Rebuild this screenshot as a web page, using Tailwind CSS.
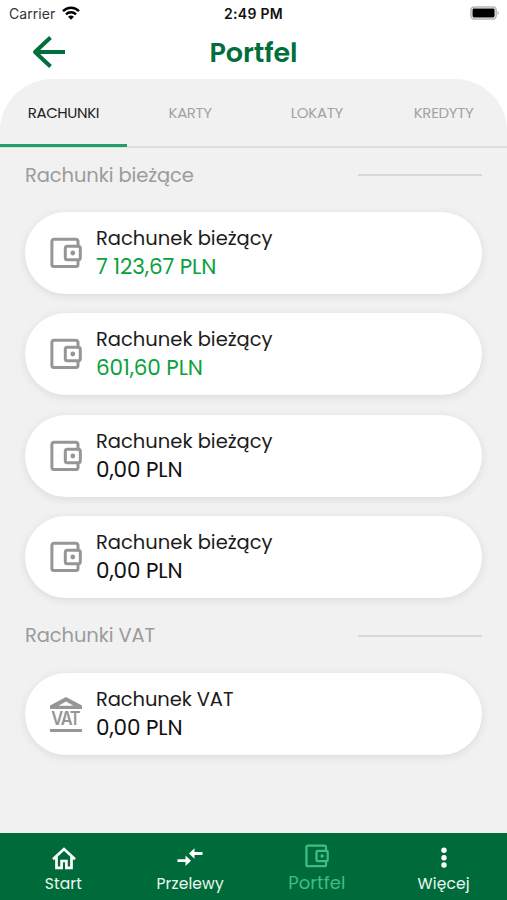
<!DOCTYPE html>
<html lang="pl">
<head>
<meta charset="utf-8">
<title>Portfel</title>
<script src="https://cdn.jsdelivr.net/npm/@tailwindcss/browser@4"></script>
</head>
<body class="bg-white">
<svg class="hidden">
  <symbol id="wallet" viewBox="0 0 32 32">
    <path d="M28 10.500V4.200A2 2 0 0 0 26 2.200H3.900A2 2 0 0 0 1.900 4.200V27.600A2 2 0 0 0 3.900 29.600H26A2 2 0 0 0 28 27.600V22.500" fill="none" stroke="currentColor" stroke-width="3"/>
    <rect x="15.300" y="9.300" width="15" height="13.500" rx="2" fill="none" stroke="currentColor" stroke-width="3"/>
    <circle cx="22.800" cy="16" r="2.400" fill="currentColor"/>
  </symbol>
</svg>
<div class="flex h-[900px] w-[507px] flex-col overflow-hidden bg-white font-['Poppins',sans-serif]">
  <div class="grid h-[27px] shrink-0 grid-cols-3 items-center pl-[9px] pr-[7px] font-['Inter',sans-serif] text-[14px]">
    <div class="flex items-center gap-[7px] tracking-[0.050px] text-[#333]">
      <span>Carrier</span>
      <svg class="-mt-[2px] h-[14px] w-[18px]" viewBox="0 0 18 14" fill="none" stroke="#000" stroke-width="2.400"><path d="M1 5.200C5.500.600 12.500.600 17 5.200M4 8.400C6.800 5.600 11.200 5.600 14 8.400"/><path d="M9 13.700L6 10.700Q9 8.300 12 10.700Z" fill="#000" stroke="none"/></svg>
    </div>
    <span class="-ml-[2px] text-center font-semibold tracking-[0.3px] text-[#111]">2:49 PM</span>
    <svg class="-mt-px h-[14px] w-[30px] justify-self-end" viewBox="0 0 31 14"><rect x="1" y=".7" width="26" height="12.600" rx="3.500" fill="#fff" stroke="#b5b5b5" stroke-width="1.600"/><rect x="2.600" y="2.400" width="22.800" height="9.200" rx="1.500"/><path d="M28.500 5Q31 7 28.500 9Z" fill="#aaa"/></svg>
  </div>
  <header class="grid h-[52px] shrink-0 grid-cols-[1fr_auto_1fr] items-center">
    <svg class="-mt-[3px] ml-[32px] h-[32px] w-[33px]" viewBox="0 0 33 32" fill="none" stroke="#006f3c" stroke-width="4" stroke-linejoin="round"><path d="M33 16H3M18.500 1.500L3 16L18.500 30.500"/></svg>
    <h1 class="-mt-px text-[27px] font-semibold leading-[52px] tracking-[-0.050px] text-[#006f3c]">Portfel</h1>
  </header>
  <main class="flex-1 rounded-t-[52px] bg-[#f1f1f1]">
    <nav class="grid h-[69px] grid-cols-4 border-b-2 border-[#dedede] text-center text-[15px] leading-[68px] text-[#a3a3a3]">
      <span class="h-[68px] border-b-3 border-[#21a06c] tracking-[-0.400px] text-[#222]">RACHUNKI</span>
      <span class="tracking-[-0.400px]">KARTY</span>
      <span class="tracking-[-0.300px]">LOKATY</span>
      <span class="tracking-[-0.300px]">KREDYTY</span>
    </nav>
    <div class="px-[25px]">
      <div class="flex h-[64px] items-start justify-between pt-[12.500px] text-[19.500px] leading-[30px] text-[#9b9b9b]">
        <h2 class="tracking-[-0.100px]">Rachunki bieżące</h2><div class="mt-[13.500px] h-[2px] w-[124px] bg-[#d8d8d8]"></div>
      </div>
      <div class="flex flex-col gap-[19.400px]">
        <article class="flex h-[82px] items-center rounded-full bg-white pl-[24.500px] shadow-[0_2px_10px_rgba(0,0,0,0.09)]"><svg class="size-[32px] text-[#969696]"><use href="#wallet"/></svg><div class="ml-[14.500px]"><p class="text-[19.500px] leading-[28px] text-[#1c1c1c]">Rachunek bieżący</p><p class="text-[21.500px] leading-[28px] tracking-[-0.120px] text-[#0ca13c]">7 123,67 PLN</p></div></article>
        <article class="flex h-[82px] items-center rounded-full bg-white pl-[24.500px] shadow-[0_2px_10px_rgba(0,0,0,0.09)]"><svg class="size-[32px] text-[#969696]"><use href="#wallet"/></svg><div class="ml-[14.500px]"><p class="text-[19.500px] leading-[28px] text-[#1c1c1c]">Rachunek bieżący</p><p class="text-[21.500px] leading-[28px] tracking-[-0.120px] text-[#0ca13c]">601,60 PLN</p></div></article>
        <article class="flex h-[82px] items-center rounded-full bg-white pl-[24.500px] shadow-[0_2px_10px_rgba(0,0,0,0.09)]"><svg class="size-[32px] text-[#969696]"><use href="#wallet"/></svg><div class="ml-[14.500px]"><p class="text-[19.500px] leading-[28px] text-[#1c1c1c]">Rachunek bieżący</p><p class="text-[21.500px] leading-[28px] tracking-[-0.120px] text-[#111]">0,00 PLN</p></div></article>
        <article class="flex h-[82px] items-center rounded-full bg-white pl-[24.500px] shadow-[0_2px_10px_rgba(0,0,0,0.09)]"><svg class="size-[32px] text-[#969696]"><use href="#wallet"/></svg><div class="ml-[14.500px]"><p class="text-[19.500px] leading-[28px] text-[#1c1c1c]">Rachunek bieżący</p><p class="text-[21.500px] leading-[28px] tracking-[-0.120px] text-[#111]">0,00 PLN</p></div></article>
      </div>
      <div class="flex h-[74.400px] items-start justify-between pt-[22.400px] text-[19.500px] leading-[30px] text-[#9b9b9b]">
        <h2 class="tracking-[-0.100px]">Rachunki VAT</h2><div class="mt-[14px] h-[2px] w-[124px] bg-[#d8d8d8]"></div>
      </div>
      <article class="flex h-[82px] items-center rounded-full bg-white pl-[24.500px] shadow-[0_2px_10px_rgba(0,0,0,0.09)]">
        <div class="mt-[2px] flex h-[35px] w-[32px] flex-col items-center text-[#969696]">
          <svg class="h-[12px] w-[32px] shrink-0" viewBox="0 0 32 12" fill="currentColor"><path fill-rule="evenodd" d="M0 8.500L16 0L32 8.500V12H0ZM8.500 8.700H23.500L16 4.500Z"/></svg>
          <span class="flex h-[20px] w-full justify-center whitespace-nowrap font-['Inter',sans-serif] text-[19px] font-semibold leading-[20px] tracking-[-1.500px]"><span class="inline-block scale-x-[.86]">VAT</span></span>
          <div class="h-[3px] w-full bg-[#969696]"></div>
        </div>
        <div class="ml-[14.500px]"><p class="text-[19.500px] leading-[28px] tracking-[-0.100px] text-[#1c1c1c]">Rachunek VAT</p><p class="text-[21.500px] leading-[28px] tracking-[-0.120px] text-[#111]">0,00 PLN</p></div>
      </article>
    </div>
  </main>
  <footer class="grid h-[67px] shrink-0 grid-cols-4 bg-[#006b3a] text-center text-[15.500px] text-[#e9f8ef]">
    <div class="flex flex-col items-center pt-[13px]"><svg class="ml-px h-[24px] w-[24px]" viewBox="0 0 24 24" fill="none" stroke="#fff" stroke-width="2.700"><path d="M1 13.300L12 3L23 13.300M4.500 11V21.800H9.600V15H14.400V21.800H19.500V11"/></svg><span class="mt-[2px] leading-[24px] tracking-[0.100px]">Start</span></div>
    <div class="flex flex-col items-center pt-[13px]"><svg class="h-[24px] w-[26px]" viewBox="0 0 26 24" fill="#fff"><path d="M.500 13.200H8.500V9.500L14 14.700L8.500 19.900V16.100H.500ZM25.500 6H17.500V2.300L12 7.500L17.500 12.700V8.900H25.500Z"/></svg><span class="mt-[2px] leading-[24px] tracking-[0.150px]">Przelewy</span></div>
    <div class="flex flex-col items-center pt-[11px] text-[#41bd83]"><svg class="size-[24px]"><use href="#wallet"/></svg><span class="mt-[1.500px] text-[18px] leading-[26px] tracking-[0.100px]">Portfel</span></div>
    <div class="flex flex-col items-center pt-[13px]"><svg class="size-[24px]" viewBox="0 0 24 24" fill="#fff"><circle cx="12" cy="4.200" r="2.700"/><circle cx="12" cy="11.700" r="2.700"/><circle cx="12" cy="19" r="2.700"/></svg><span class="mt-[2px] leading-[24px] tracking-[0.100px]">Więcej</span></div>
  </footer>
</div>
</body>
</html>
